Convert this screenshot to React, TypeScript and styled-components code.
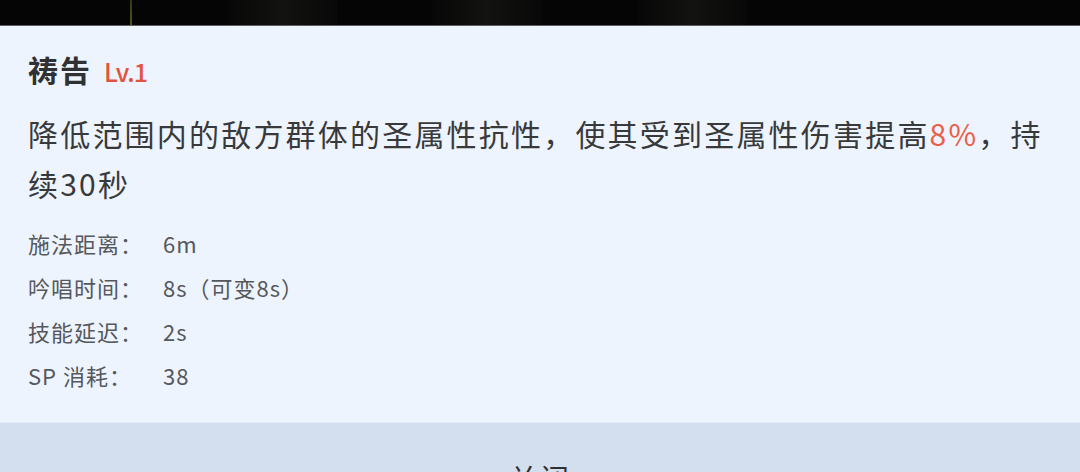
import { Fragment } from "react";
import styled, { createGlobalStyle } from "styled-components";

const GlobalStyle = createGlobalStyle`
  html, body {
    margin: 0;
    padding: 0;
    background: #050505;
  }
  body {
    font-family: "Noto Sans CJK SC", "Noto Sans", sans-serif;
    -webkit-font-smoothing: antialiased;
  }
`;

const Screen = styled.div`
  width: 1080px;
  height: 472px;
  overflow: hidden;
  display: flex;
  flex-direction: column;
`;

// game scene peeking above the sheet
const Backdrop = styled.div`
  height: 25px;
  flex-shrink: 0;
  display: flex;
  gap: 95px;
  padding-left: 130px;
  background: #050505;
  border-bottom: 1px solid #5a5e63;
`;

const GlowLine = styled.div`
  width: 2px;
  background: linear-gradient(#2f3a12, #4a5a1c);
`;

const Shade = styled.div<{ $w: number }>`
  width: ${(p) => p.$w}px;
  background: linear-gradient(90deg, #070707, #121210 50%, #080808);
`;

const Sheet = styled.div`
  flex: 1;
  display: flex;
  flex-direction: column;
  background: #eef4fd;
`;

const Body = styled.div`
  padding: 23px 28px 25px;
  display: flex;
  flex-direction: column;
`;

const TitleRow = styled.div`
  display: flex;
  align-items: baseline;
  gap: 12px;
  height: 40px;
  line-height: 40px;
`;

const SkillName = styled.span`
  font-size: 30px;
  font-weight: 700;
  letter-spacing: 2px;
  color: #303133;
`;

const Level = styled.span`
  font-size: 25px;
  font-weight: 500;
  letter-spacing: -1px;
  color: #e2533f;
`;

const Desc = styled.p`
  margin: 19px 0 0;
  font-size: 30px;
  line-height: 50px;
  letter-spacing: 2.2px;
  color: #38393b;
`;

const Hl = styled.span`
  color: #e9604a;
`;

const Stats = styled.div`
  margin-top: 13px;
  display: grid;
  grid-template-columns: 135px auto;
  justify-content: start;
  font-size: 22px;
  line-height: 44px;
  letter-spacing: 1px;
  color: #55585c;
`;

const Footer = styled.div`
  flex: 1;
  display: flex;
  justify-content: center;
  background: #d3dfee;
  border-top: 1px solid #e2eaf5;
`;

const CloseBtn = styled.button`
  border: 0;
  background: none;
  padding: 0;
  margin-top: 34px;
  height: 40px;
  font-family: inherit;
  font-size: 29px;
  letter-spacing: 2px;
  color: #2e3033;
`;

const stats = [
  ["施法距离：", "6m"],
  ["吟唱时间：", "8s（可变8s）"],
  ["技能延迟：", "2s"],
  ["SP 消耗：", "38"],
];

export default function App() {
  return (
    <Screen>
      <GlobalStyle />
      <Backdrop>
        <GlowLine />
        <Shade $w={110} />
        <Shade $w={110} />
        <Shade $w={110} />
      </Backdrop>
      <Sheet>
        <Body>
          <TitleRow>
            <SkillName>祷告</SkillName>
            <Level>Lv.1</Level>
          </TitleRow>
          <Desc>
            降低范围内的敌方群体的圣属性抗性，使其受到圣属性伤害提高<Hl>8%</Hl>，持续30秒
          </Desc>
          <Stats>
            {stats.map(([label, value]) => (
              <Fragment key={label}>
                <span>{label}</span>
                <span>{value}</span>
              </Fragment>
            ))}
          </Stats>
        </Body>
        <Footer>
          <CloseBtn>关闭</CloseBtn>
        </Footer>
      </Sheet>
    </Screen>
  );
}
